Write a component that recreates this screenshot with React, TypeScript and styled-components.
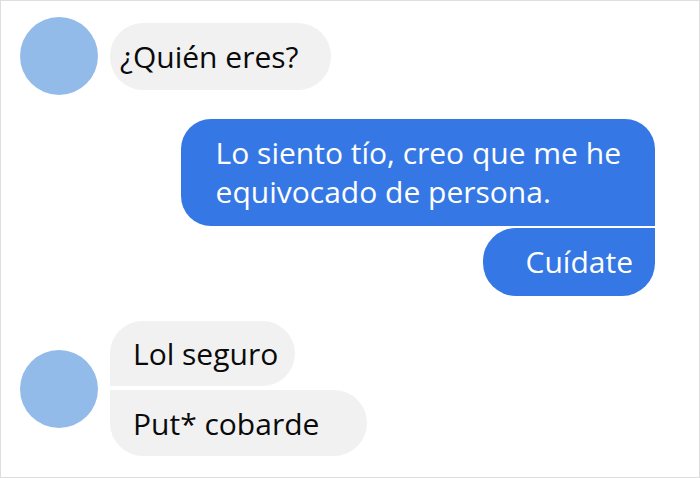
import React from 'react';
import styled, { createGlobalStyle } from 'styled-components';

const GlobalStyle = createGlobalStyle`
    html, body {
        margin: 0;
        padding: 0;
        background: #ffffff;
    }
    body {
        font-family: 'Open Sans', 'Noto Sans', sans-serif;
    }
`;

type Corner = { tl?: number; tr?: number; br?: number; bl?: number };

const R = 33;

const App = () => {
    return (
        <>
            <GlobalStyle />
            <Frame>
                <ReceivedRow $top={16}>
                    <Avatar />
                    <Stack>
                        <GreyBubble $pad="0 32px 0 10px" $h={67}>¿Quién eres?</GreyBubble>
                    </Stack>
                </ReceivedRow>

                <SentStack>
                    <BlueBubble $pad="14px 34px 15px 35px" $r={{ tl: 30, tr: 30, br: 0, bl: 30 }}>
                        Lo siento tío, creo que me he
                        <br />
                        equivocado de persona.
                    </BlueBubble>
                    <BlueBubble $pad="14px 22px 15px 43px" $r={{ tl: R, tr: 0, br: R, bl: R }}>
                        Cuídate
                    </BlueBubble>
                </SentStack>

                <ReceivedRow $top={25}>
                    <Avatar />
                    <Stack>
                        <GreyBubble $pad="0 17px 0 23px" $h={65} $r={{ tl: R, tr: R, br: R, bl: 0 }}>
                            Lol seguro
                        </GreyBubble>
                        <GreyBubble $pad="0 48px 0 23px" $h={66} $r={{ tl: 0, tr: R, br: R, bl: R }}>
                            Put* cobarde
                        </GreyBubble>
                    </Stack>
                </ReceivedRow>
            </Frame>
        </>
    );
};

const corners = (r?: Corner) =>
    r ? `${r.tl ?? R}px ${r.tr ?? R}px ${r.br ?? R}px ${r.bl ?? R}px` : `${R}px`;

const Frame = styled.main`
    box-sizing: border-box;
    width: 700px;
    height: 478px;
    border: 1px solid #dedede;
    display: flex;
    flex-direction: column;
    overflow: hidden;
`;

const ReceivedRow = styled.section<{ $top: number }>`
    display: flex;
    align-items: center;
    gap: 12px;
    margin-top: ${(p) => p.$top}px;
    padding-left: 19px;
`;

const Avatar = styled.div`
    width: 78px;
    height: 78px;
    border-radius: 50%;
    background: #93bbe9;
    flex-shrink: 0;
`;

const Stack = styled.div`
    display: flex;
    flex-direction: column;
    align-items: flex-start;
    gap: 4px;
`;

const GreyBubble = styled.div<{ $pad: string; $h: number; $r?: Corner }>`
    box-sizing: border-box;
    height: ${(p) => p.$h}px;
    display: flex;
    align-items: center;
    padding: ${(p) => p.$pad};
    background: #f1f1f1;
    color: #0a0a0a;
    font-size: 30px;
    white-space: nowrap;
    border-radius: ${(p) => corners(p.$r)};
`;

const SentStack = styled.section`
    display: flex;
    flex-direction: column;
    align-items: flex-end;
    gap: 2px;
    margin-top: 24px;
    padding-right: 44px;
`;

const BlueBubble = styled.div<{ $pad: string; $r: Corner }>`
    padding: ${(p) => p.$pad};
    background: #3578e5;
    color: #ffffff;
    font-size: 30px;
    line-height: 39px;
    white-space: nowrap;
    border-radius: ${(p) => corners(p.$r)};
`;

export default App;
